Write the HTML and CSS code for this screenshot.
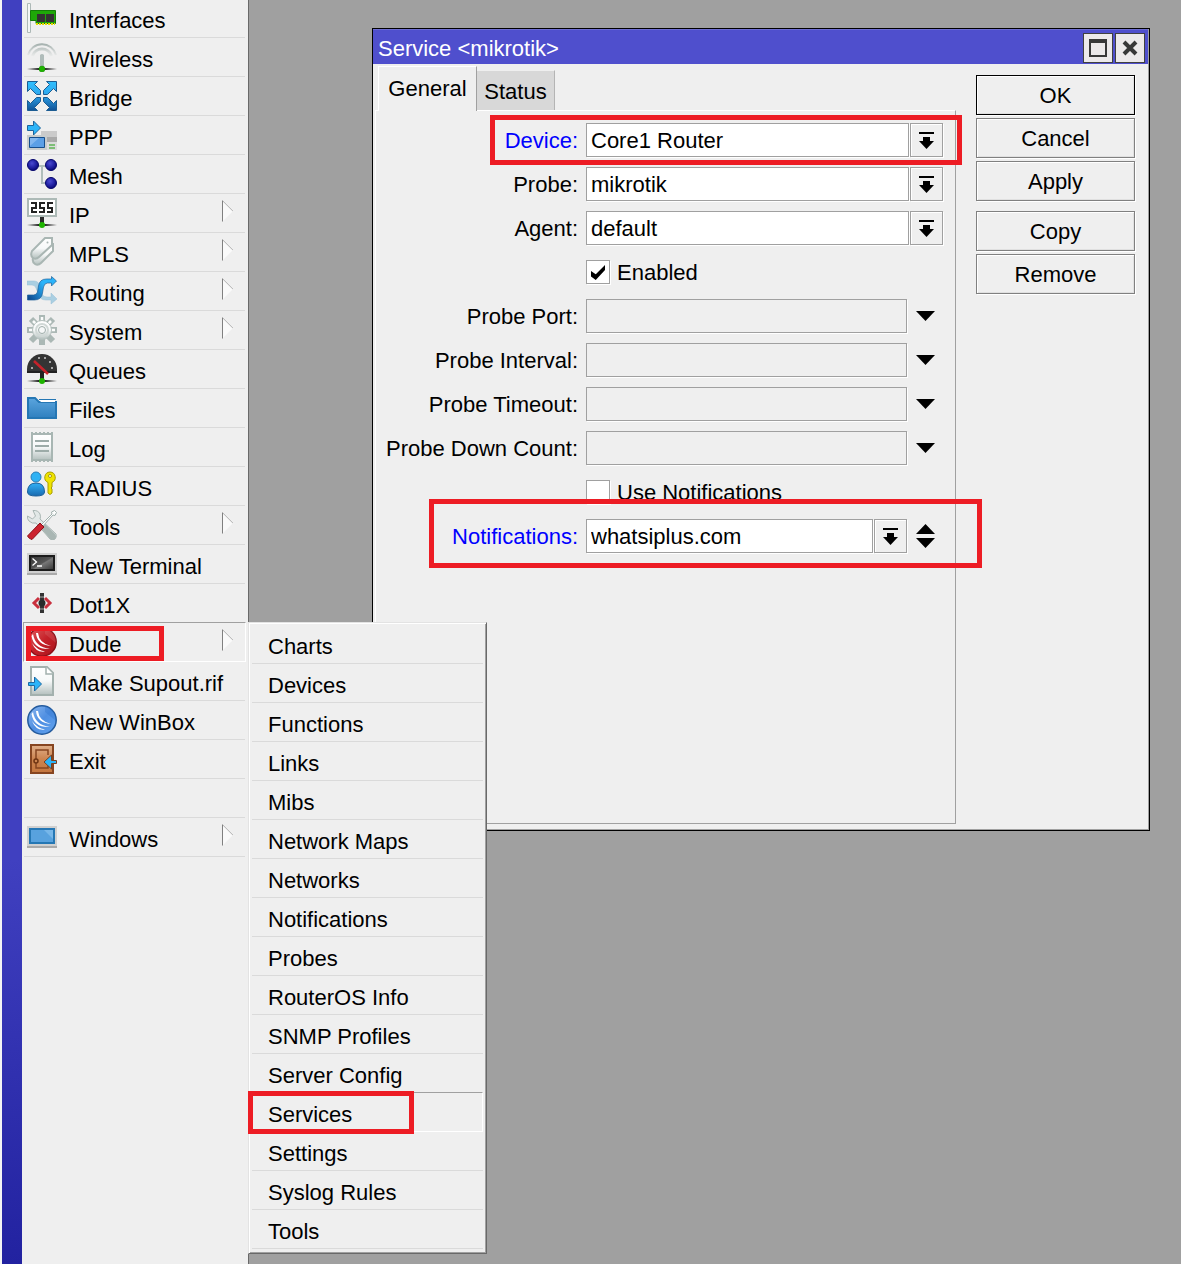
FILE: index.html
```html
<!DOCTYPE html>
<html lang="en">
<head>
<meta charset="utf-8">
<title>WinBox</title>
<link rel="stylesheet" href="styles.css">
</head>
<body>
<svg class="defs" width="0" height="0" aria-hidden="true">
  <defs>
    <linearGradient id="sky" x1="0" y1="0" x2="0" y2="30" gradientUnits="userSpaceOnUse"><stop offset="0" stop-color="#2fc0ff"/><stop offset=".45" stop-color="#2fa8ee"/><stop offset="1" stop-color="#0f4f94"/></linearGradient>
    <linearGradient id="silver" x1="0" y1="0" x2="0" y2="1"><stop offset="0" stop-color="#fff"/><stop offset=".5" stop-color="#f6f8f8"/><stop offset="1" stop-color="#b4c0be"/></linearGradient>
    <linearGradient id="fade" x1="0" y1="0" x2="30" y2="0" gradientUnits="userSpaceOnUse"><stop offset="0" stop-color="#222" stop-opacity="0"/><stop offset=".4" stop-color="#222"/><stop offset=".6" stop-color="#222"/><stop offset="1" stop-color="#222" stop-opacity="0"/></linearGradient>
    <linearGradient id="wave" x1="0" y1="0" x2="0" y2="15" gradientUnits="userSpaceOnUse"><stop offset="0" stop-color="#98a6a3"/><stop offset="1" stop-color="#a3b0ad" stop-opacity="0"/></linearGradient>
    <linearGradient id="flow" x1="0" y1="24" x2="26" y2="4" gradientUnits="userSpaceOnUse"><stop offset="0" stop-color="#0b3f86"/><stop offset=".7" stop-color="#2bb4fa"/></linearGradient>
    <radialGradient id="ball" cx=".4" cy=".35" r=".65"><stop offset="0" stop-color="#4a4ad0"/><stop offset=".55" stop-color="#2525a8"/><stop offset="1" stop-color="#0a0a78"/></radialGradient>
    <linearGradient id="red" x1="0" y1="0" x2="1" y2="1"><stop offset="0" stop-color="#e06060"/><stop offset=".5" stop-color="#c6222a"/><stop offset="1" stop-color="#a8141c"/></linearGradient>
    <linearGradient id="blue" x1="0" y1="0" x2="1" y2="1"><stop offset="0" stop-color="#8cb8f0"/><stop offset=".5" stop-color="#4f8fe2"/><stop offset="1" stop-color="#62a4f0"/></linearGradient>
    <linearGradient id="screen" x1="0" y1="0" x2="1" y2="1"><stop offset="0" stop-color="#333"/><stop offset=".5" stop-color="#555"/><stop offset=".55" stop-color="#777"/><stop offset="1" stop-color="#333"/></linearGradient>
    <linearGradient id="folder" x1="0" y1="0" x2="0" y2="1"><stop offset="0" stop-color="#5ba5de"/><stop offset="1" stop-color="#2f80bf"/></linearGradient>
    <linearGradient id="wood" x1="0" y1="0" x2="0" y2="1"><stop offset="0" stop-color="#e0b08a"/><stop offset=".5" stop-color="#cc8450"/><stop offset="1" stop-color="#c4763e"/></linearGradient>
  </defs>
</svg>

<div class="app">
  <div class="brand-strip"></div>
  <nav class="menu" aria-label="Main menu">
    <ul class="menu-list">
      <li class="row"><a href="#"><svg class="icon" viewBox="0 0 30 30"><path d="M.5.5h3v29h-3z" fill="#f4f6f6" stroke="#adb9b7"/><path d="M3.500 7.500h25v13H9v-3H3.500z" fill="#1ea808" stroke="#147d08"/><path d="M10 11h8v8h-8zM19 11h8v8h-8z" fill="#333"/><path d="M9 21h19" stroke="#e4dc00" stroke-width="2" stroke-dasharray="2 1"/></svg>Interfaces</a></li>
      <li class="row"><a href="#"><svg class="icon" viewBox="0 0 30 30"><g fill="none" stroke="url(#wave)"><path d="M1 13a14.500 14.500 0 0 1 28 0" stroke-width="2"/><path d="M5.500 14a10 10 0 0 1 19 0" stroke-width="3"/></g><path d="M13 13q2-2 4 0v12h-4z" fill="#b0bcba"/><path d="M0 27h30" stroke="url(#fade)" stroke-width="2"/><circle cx="15" cy="27" r="3" fill="#1eb400" stroke="#158a00" stroke-width=".5"/></svg>Wireless</a></li>
      <li class="row"><a href="#"><svg class="icon" viewBox="0 0 30 30"><g fill="url(#sky)" stroke="#1c5c92" stroke-width="1"><path d="M.5.500h10l-3 3 6 6v4h-4l-6-6-3 3z"/><path d="M29.500.500h-10l3 3-6 6v4h4l6-6 3 3z"/><path d="M.5 29.500h10l-3-3 6-6v-4h-4l-6 6-3-3z"/><path d="M29.500 29.500h-10l3-3-6-6v-4h4l6 6 3-3z"/></g></svg>Bridge</a></li>
      <li class="row"><a href="#"><svg class="icon" viewBox="0 0 30 30"><path d="M14 11h16v6H14z" fill="#cbcbcb"/><path d="M20 17h10v5H20z" fill="#aaa"/><path d="M0 15h20v15H0z" fill="#c9cccc"/><path d="M20 22h10v8H20z" fill="#dcdcdc"/><path d="M22 25h6M22 28h6" stroke="#1ea010"/><path d="M2.500 17.500h15v10h-15z" fill="#5b9fe6" stroke="#164e8c"/><path d="M3 18h9l-9 8z" fill="#9cc6f4" opacity=".6"/><path d="M.5 5.500h6V1l7 7-7 7v-4.500h-6z" fill="#2cb4f8" stroke="#1c649c"/></svg>PPP</a></li>
      <li class="row"><a href="#"><svg class="icon" viewBox="0 0 30 30"><path d="M6 7h18M15 7v17h9" fill="none" stroke="#b0bebb" stroke-width="2"/><circle cx="6" cy="6" r="5.500" fill="url(#ball)" stroke="#06066c"/><circle cx="24" cy="6" r="5.500" fill="url(#ball)" stroke="#06066c"/><circle cx="24" cy="24" r="5.500" fill="url(#ball)" stroke="#06066c"/></svg>Mesh</a></li>
      <li class="row"><a href="#"><svg class="icon" viewBox="0 0 30 30"><path d="M1 1h28v17H1z" fill="#fff" stroke="#adbab7" stroke-width="2"/><g fill="none" stroke="#222" stroke-width="2"><path d="M4 5h5v5H5v4h5"/><path d="M18 5h-5v5h4v4h-5"/><path d="M26 5h-5v5h4v4h-5"/></g><path d="M13 19h4v6h-4z" fill="#2b2b2b"/><path d="M0 27h30" stroke="url(#fade)" stroke-width="2"/><circle cx="15" cy="27" r="3" fill="#1eb400"/></svg>IP<i class="more"></i></a></li>
      <li class="row"><a href="#"><svg class="icon" viewBox="0 0 30 30"><g stroke="#a9b6b3" stroke-width="2" fill="url(#silver)"><path d="M20 7h6v7L14 26q-3 3-6 1t-2-6z"/><path d="M18 1h7v7L12 20q-3 3-6 1t-1-7z"/></g><circle cx="20.500" cy="5.500" r="1" fill="#a9b6b3"/></svg>MPLS<i class="more"></i></a></li>
      <li class="row"><a href="#"><svg class="icon" viewBox="0 0 30 30"><path d="M0 5h7q5 0 6 6l2 7q1 3 5 3h4v-4l6 6-6 5v-4h-5q-7 0-8-7l-2-5q-1-3-4-3H0z" fill="#aacfe2" stroke="#95bfd6" stroke-width=".5"/><path d="M.5 19h6q3 0 4-3l1-6q1-7 8-7h5V.500l5 4.500-5 5V7h-4q-3 0-4 4l-1 6q-1 7-8 7h-7z" fill="url(#flow)" stroke="#1c5e98" stroke-width=".7"/></svg>Routing<i class="more"></i></a></li>
      <li class="row"><a href="#"><svg class="icon" viewBox="0 0 30 30"><g stroke="#abb8b5" stroke-width="6"><path d="M15 0v30M0 15h30M4 4l22 22M26 4L4 26"/></g><path d="M15 2v8M2 15h8M28 15h-8M6 6l5 5M24 6l-5 5" stroke="#fbfcfc" stroke-width="2.500"/><circle cx="15" cy="15" r="9.500" fill="url(#silver)" stroke="#b4c0bd"/><circle cx="15" cy="15" r="6" fill="none" stroke="#d0d8d6" stroke-width="2"/><circle cx="15" cy="15" r="3.500" fill="#f6f8f8" stroke="#9fadaa"/></svg>System<i class="more"></i></a></li>
      <li class="row"><a href="#"><svg class="icon" viewBox="0 0 30 30"><path d="M0 19v-4a15 15 0 0 1 30 0v4z" fill="#343434"/><path d="M0 17h30v2H0zM13 19h4v6h-4z" fill="#222"/><g fill="#ccc"><circle cx="5" cy="14" r="1"/><circle cx="12" cy="4" r="1"/><circle cx="18" cy="4" r="1"/><circle cx="23" cy="8" r="1"/><circle cx="25" cy="14" r="1"/></g><path d="M7 7l14 13" stroke="#c6222a" stroke-width="2.500"/><path d="M0 27h30" stroke="url(#fade)" stroke-width="2"/><circle cx="15" cy="27" r="3" fill="#1eb400"/></svg>Queues</a></li>
      <li class="row"><a href="#"><svg class="icon" viewBox="0 0 30 30"><path d="M1 5h7l4 4h17v16H1z" fill="url(#folder)" stroke="#2577b4" stroke-width="2"/><path d="M12 7h16v2H14z" fill="#fff"/><path d="M12 6.500h17" stroke="#2577b4"/></svg>Files</a></li>
      <li class="row"><a href="#"><svg class="icon" viewBox="0 0 30 30"><path d="M5 2h20v26H5z" fill="url(#silver)" stroke="#a8b6b3" stroke-width="2"/><path d="M4 1h22M4 29h22" stroke="#a8b6b3" stroke-width="2" stroke-dasharray="2 2"/><path d="M8 9h14M8 14h14M8 19h14" stroke="#9caba8" stroke-width="2"/></svg>Log</a></li>
      <li class="row"><a href="#"><svg class="icon" viewBox="0 0 30 30"><path d="M.5 21q0-9 8.500-9t8.500 9q0 4-8.500 4T.500 21z" fill="url(#sky)" stroke="#1b5f9a"/><circle cx="9" cy="6" r="5" fill="#2fb2f4" stroke="#2a7fb8"/><path d="M23 1a5.500 5.500 0 0 1 2 10.500V16l-1 1 1 1v4l-2 1.500-2-1.500V11.500A5.500 5.500 0 0 1 23 1z" fill="#f0e400" stroke="#a89c00"/><circle cx="23" cy="5" r="1.500" fill="#fff" stroke="#a89c00"/></svg>RADIUS</a></li>
      <li class="row"><a href="#"><svg class="icon" viewBox="0 0 30 30"><path d="M6 .5Q11 0 13 4q1 3 0 5l16 15q1 3-1 5t-5 0L9 13q-4 1-7-2Q0 9 .5 6l5 3 3-3z" fill="#e2e8e7" stroke="#a9b6b3"/><path d="M18 14l10 10q2 3 0 5t-5 0L14 18z" fill="#a9b6b3"/><path d="M14 15L25 4l-.5-2 3-1.500 2 2-1.500 3-2-.5L15 17z" fill="#fff" stroke="#a0afac"/><path d="M13 13l4 4L5 29.500Q2 29 .5 26z" fill="#cc2430" stroke="#8c1018"/></svg>Tools<i class="more"></i></a></li>
      <li class="row"><a href="#"><svg class="icon" viewBox="0 0 30 30"><path d="M0 4h30v20H0z" fill="#d0d0d0"/><path d="M0 24h30v2H0z" fill="#aaa"/><path d="M3 7h24v14H3z" fill="url(#screen)" stroke="#1c1c1c" stroke-width="2"/><path d="M5.500 9.500l4 3.500-4 3.500M10 17h5" fill="none" stroke="#fff" stroke-width="1.300"/></svg>New Terminal</a></li>
      <li class="row"><a href="#"><svg class="icon" viewBox="0 0 30 30"><path d="M13 5h4v20h-4z" fill="#333"/><path d="M12 10L7 15l5 5M18 10l5 5-5 5" fill="none" stroke="#c8303e" stroke-width="3"/><path d="M13 9h4M13 21h4" stroke="#aaa"/><circle cx="15" cy="15" r="3.500" fill="#2a2a2a"/></svg>Dot1X</a></li>
      <li class="row row-open"><a href="#" aria-expanded="true"><svg class="icon" viewBox="0 0 30 30"><circle cx="15" cy="15" r="14.200" fill="url(#red)" stroke="#8e1018" stroke-width="1.500"/><path d="M18 1a14 14 0 0 1 11 15L18 7z" fill="#fff" opacity=".1"/><path d="M11 6Q12 16 24 19Q10 18 9 6zM6 7Q8 20 23 22Q7 23 4.500 9zM5 16Q10 23 18 24.500Q9 26 5 16z" fill="#fff"/></svg>Dude<i class="more"></i></a>
        <span class="mark mark-dude"></span>
        <ul class="submenu">
          <li class="row"><a href="#">Charts</a></li>
          <li class="row"><a href="#">Devices</a></li>
          <li class="row"><a href="#">Functions</a></li>
          <li class="row"><a href="#">Links</a></li>
          <li class="row"><a href="#">Mibs</a></li>
          <li class="row"><a href="#">Network Maps</a></li>
          <li class="row"><a href="#">Networks</a></li>
          <li class="row"><a href="#">Notifications</a></li>
          <li class="row"><a href="#">Probes</a></li>
          <li class="row"><a href="#">RouterOS Info</a></li>
          <li class="row"><a href="#">SNMP Profiles</a></li>
          <li class="row"><a href="#">Server Config</a></li>
          <li class="row row-open"><a href="#">Services</a><span class="mark mark-services"></span></li>
          <li class="row"><a href="#">Settings</a></li>
          <li class="row"><a href="#">Syslog Rules</a></li>
          <li class="row"><a href="#">Tools</a></li>
        </ul>
      </li>
      <li class="row"><a href="#"><svg class="icon" viewBox="0 0 30 30"><path d="M4 1h16l6 6v22H4z" fill="url(#silver)" stroke="#a3b1ae" stroke-width="2"/><path d="M19 1v7h7" fill="#fff" stroke="#a3b1ae" stroke-width="1.500"/><path d="M1.500 16.500h6V11l7 7-7 7v-5.500h-6z" fill="#2cb4f8" stroke="#1c6aa4"/></svg>Make Supout.rif</a></li>
      <li class="row"><a href="#"><svg class="icon" viewBox="0 0 30 30"><circle cx="15" cy="15" r="14.200" fill="url(#blue)" stroke="#235a9c" stroke-width="1.500"/><path d="M18 1a14 14 0 0 1 11 15L18 7z" fill="#2f74cc" opacity=".35"/><path d="M11 6Q12 16 24 19Q10 18 9 6zM6 7Q8 20 23 22Q7 23 4.500 9zM5 16Q10 23 18 24.500Q9 26 5 16z" fill="#fff"/></svg>New WinBox</a></li>
      <li class="row"><a href="#"><svg class="icon" viewBox="0 0 30 30"><path d="M4 1h22v28H4z" fill="url(#wood)" stroke="#864520" stroke-width="2"/><path d="M9 15V6h12v5M9 19v5h12v-3" fill="none" stroke="#864520" stroke-width="1.500"/><circle cx="9" cy="17" r="2" fill="#cc8450" stroke="#6e3412" stroke-width="1.500"/><path d="M29.500 16.500h-5V11l-7.500 7 7.500 7v-5.500h5z" fill="#2cb4f8" stroke="#7a4020"/></svg>Exit</a></li>
      <li class="row"></li>
      <li class="row"><a href="#"><svg class="icon" viewBox="0 0 30 30"><path d="M0 4h30v20H0z" fill="#d0d0d0"/><path d="M0 24h30v2H0z" fill="#aaa"/><path d="M3 7h24v14H3z" fill="#58a2de" stroke="#2577b4" stroke-width="2"/><path d="M17 8h9v9z" fill="#8cc4f0" opacity=".6"/></svg>Windows<i class="more"></i></a></li>
    </ul>
  </nav>

  <main class="desktop">
    <section class="window" aria-label="Service">
      <header class="titlebar">
        <h1>Service &lt;mikrotik&gt;</h1>
        <button class="tool" type="button" aria-label="Maximize"><svg width="18" height="18" viewBox="0 0 18 18"><path d="M1 1h16v16H1z" fill="none" stroke="#383838" stroke-width="2"/><path d="M0 0h18v4H0z" fill="#383838"/></svg></button>
        <button class="tool" type="button" aria-label="Close"><svg width="18" height="18" viewBox="0 0 18 18"><path d="M3 3l12 12M15 3L3 15" stroke="#383838" stroke-width="4"/></svg></button>
      </header>
      <div class="content">
        <div class="tabbed">
          <div class="tabs" role="tablist">
            <button class="tab tab-active" type="button" role="tab" aria-selected="true">General</button>
            <button class="tab" type="button" role="tab" aria-selected="false">Status</button>
          </div>
          <form class="panel">
            <div class="field">
              <label class="changed" for="device">Device:</label>
              <input id="device" type="text" value="Core1 Router">
              <button class="drop" type="button" aria-label="Choose device"><svg width="15" height="17" viewBox="0 0 15 17"><path d="M0 0h15v2H0zM4 5h7v4h4l-7.500 8L0 9h4z"/></svg></button>
              <span class="mark mark-device"></span>
            </div>
            <div class="field">
              <label for="probe">Probe:</label>
              <input id="probe" type="text" value="mikrotik">
              <button class="drop" type="button" aria-label="Choose probe"><svg width="15" height="17" viewBox="0 0 15 17"><path d="M0 0h15v2H0zM4 5h7v4h4l-7.500 8L0 9h4z"/></svg></button>
            </div>
            <div class="field">
              <label for="agent">Agent:</label>
              <input id="agent" type="text" value="default">
              <button class="drop" type="button" aria-label="Choose agent"><svg width="15" height="17" viewBox="0 0 15 17"><path d="M0 0h15v2H0zM4 5h7v4h4l-7.500 8L0 9h4z"/></svg></button>
            </div>
            <div class="field check">
              <input id="enabled" type="checkbox" checked>
              <label for="enabled">Enabled</label>
            </div>
            <div class="field">
              <label for="port">Probe Port:</label>
              <input id="port" class="unset" type="text">
              <button class="toggle" type="button" aria-label="Set probe port"><svg width="19" height="10" viewBox="0 0 19 10"><path d="M0 0h19L9.500 10z"/></svg></button>
            </div>
            <div class="field">
              <label for="interval">Probe Interval:</label>
              <input id="interval" class="unset" type="text">
              <button class="toggle" type="button" aria-label="Set probe interval"><svg width="19" height="10" viewBox="0 0 19 10"><path d="M0 0h19L9.500 10z"/></svg></button>
            </div>
            <div class="field">
              <label for="timeout">Probe Timeout:</label>
              <input id="timeout" class="unset" type="text">
              <button class="toggle" type="button" aria-label="Set probe timeout"><svg width="19" height="10" viewBox="0 0 19 10"><path d="M0 0h19L9.500 10z"/></svg></button>
            </div>
            <div class="field">
              <label for="down">Probe Down Count:</label>
              <input id="down" class="unset" type="text">
              <button class="toggle" type="button" aria-label="Set probe down count"><svg width="19" height="10" viewBox="0 0 19 10"><path d="M0 0h19L9.500 10z"/></svg></button>
            </div>
            <div class="field check">
              <input id="use" type="checkbox">
              <label for="use">Use Notifications</label>
            </div>
            <div class="field">
              <label class="changed" for="notify">Notifications:</label>
              <input id="notify" type="text" value="whatsiplus.com">
              <button class="drop" type="button" aria-label="Choose notification"><svg width="15" height="17" viewBox="0 0 15 17"><path d="M0 0h15v2H0zM4 5h7v4h4l-7.500 8L0 9h4z"/></svg></button>
              <button class="toggle" type="button" aria-label="Add or remove notification"><svg width="19" height="24" viewBox="0 0 19 24"><path d="M0 10h19L9.500 0zM0 14h19L9.500 24z"/></svg></button>
              <span class="mark mark-notify"></span>
            </div>
          </form>
        </div>
        <div class="actions">
          <button class="action action-default" type="button">OK</button>
          <button class="action" type="button">Cancel</button>
          <button class="action" type="button">Apply</button>
          <button class="action action-group" type="button">Copy</button>
          <button class="action" type="button">Remove</button>
        </div>
      </div>
    </section>
  </main>
</div>
</body>
</html>
```

FILE: styles.css
```css
* {
  box-sizing: border-box;
}

body {
  margin: 0;
  background: #a0a0a0;
  color: #000;
  font: 22px/26px "Liberation Sans", Arial, sans-serif;
}

button,
input {
  margin: 0;
  color: inherit;
  font: inherit;
}

button {
  display: flex;
  align-items: center;
  justify-content: center;
  padding: 0;
  background: #efefef;
}

ul {
  margin: 0;
  padding: 0;
  list-style: none;
}

.defs {
  position: absolute;
}

.app {
  display: flex;
  height: 100vh;
  overflow: hidden;
}

.brand-strip {
  flex: none;
  width: 22px;
  border-left: 2px solid #f4f4f4;
  background: linear-gradient(#4040c0 68%, #2222a0);
}

/* Main menu */

.menu {
  flex: none;
  width: 227px;
  border-right: 1px solid #696969;
  background: #efefef;
}

.menu-list {
  margin: -1px 2px 0 1px;
}

.row {
  position: relative;
  height: 39px;
  padding: 0 1px;
}

.row::after {
  content: "";
  display: block;
  height: 1px;
  background: #dadada;
}

.row > a {
  display: flex;
  align-items: center;
  gap: 12px;
  height: 38px;
  padding: 6px 12px 0 3px;
  color: inherit;
  text-decoration: none;
}

.row:empty {
  padding-top: 38px;
}

.icon {
  flex: none;
  width: 30px;
  height: 30px;
  margin-top: -6px;
}

.more {
  width: 11px;
  height: 22px;
  margin: -10px 0 0 auto;
  border-left: 1px solid #808080;
  background: linear-gradient(45deg, #fafafa 62%, #808080 66%);
  clip-path: polygon(0 0, 100% 50%, 0 100%);
}

.row-open {
  height: 40px;
  margin-top: -1px;
  padding: 0;
  border: 1px solid;
  border-color: #a0a0a0 #fff #fff #a0a0a0;
}

.row-open::after {
  display: none;
}

.submenu {
  position: absolute;
  top: -1px;
  left: 224px;
  z-index: 2;
  width: 239px;
  padding: 2px 3px 4px;
  border: 1px solid;
  border-color: #e3e3e3 #696969 #696969 #e3e3e3;
  background: #efefef;
  box-shadow: inset 1px 1px #fff, inset -1px -1px #a0a0a0;
}

.submenu .row {
  padding: 0;
}

.submenu .row > a {
  padding-left: 16px;
}

.submenu .row-open > a {
  padding-left: 15px;
}

/* Red call-out frames */

.mark {
  position: absolute;
  z-index: 3;
  border: 5px solid #ed1c24;
  pointer-events: none;
}

.mark-dude {
  inset: 3px 81px 0 2px;
}

.mark-services {
  inset: -2px 68px -3px -5px;
}

.mark-device {
  inset: -8px -19px -8px 114px;
}

.mark-notify {
  inset: -20px -39px -15px 53px;
}

/* Service window */

.desktop {
  position: relative;
  flex: 1;
}

.window {
  position: absolute;
  top: 28px;
  right: 31px;
  left: 123px;
  border: 1px solid #000;
  background: #efefef;
  box-shadow: inset -1px -1px #a0a0a0;
}

.titlebar {
  display: flex;
  align-items: center;
  gap: 2px;
  height: 35px;
  margin-right: 1px;
  padding: 1px 3px 0 5px;
  border-top: 1px solid #6c6cd2;
  background: #4f4fcd;
}

.titlebar h1 {
  flex: 1;
  margin: 0;
  padding-top: 2px;
  color: #fff;
  font: inherit;
}

.tool {
  width: 30px;
  height: 30px;
  border: 1px solid #404040;
  background: #ece9ea;
}

.content {
  display: flex;
  gap: 20px;
  padding: 2px 14px 6px 2px;
}

.tabbed {
  flex: 1;
  min-width: 0;
}

.tabs {
  display: flex;
  align-items: flex-end;
  padding-left: 3px;
}

.tab {
  width: 78px;
  height: 40px;
  padding-top: 2px;
  border: 0;
  border-top: 1px solid #efefef;
  border-right: 1px solid #b4b4b4;
  background: #d8d8d8;
}

.tab-active {
  width: 99px;
  height: 45px;
  margin-bottom: -1px;
  padding-top: 0;
  border-top: 1px solid #fff;
  border-right: 1px solid #a0a0a0;
  border-left: 1px solid #fff;
  background: #efefef;
}

.panel {
  display: flex;
  flex-direction: column;
  gap: 10px;
  min-height: 714px;
  padding: 12px 12px 12px 0;
  border: 1px solid;
  border-color: #fff #a0a0a0 #a0a0a0 #fff;
}

.field {
  position: relative;
  display: flex;
  align-items: center;
  height: 34px;
}

.field > label {
  flex: none;
  width: 210px;
  padding: 2px 8px 0 0;
  text-align: right;
}

.field .changed {
  color: #0000ff;
}

.field > input[type="text"] {
  flex: 1;
  min-width: 0;
  height: 34px;
  padding: 2px 4px 0;
  border: 1px solid #a0a0a0;
  border-radius: 0;
  background: #fff;
  box-shadow: 1px 1px #fff;
}

.field > input.unset[type="text"] {
  background: #efefef;
}

.drop {
  flex: none;
  width: 33px;
  height: 34px;
  margin-left: 1px;
  border: 1px solid #a0a0a0;
  box-shadow: 1px 1px #fff, inset 1px 1px #fff;
}

.toggle {
  flex: none;
  width: 36px;
  height: 34px;
  border: 0;
  background: none;
}

.check {
  padding-left: 210px;
}

.check > label {
  width: auto;
  padding: 2px 0 0 7px;
}

.check > input {
  width: 24px;
  height: 24px;
  border: 1px solid #a0a0a0;
  background: #fff;
  box-shadow: 1px 1px #fff;
  appearance: none;
}

.check > input:checked::before {
  content: "";
  display: block;
  width: 14px;
  height: 15px;
  margin: 4px;
  background: #000;
  clip-path: polygon(0 40%, 34% 62%, 100% 0, 100% 34%, 34% 100%, 0 76%);
}

.actions {
  display: flex;
  flex: none;
  flex-direction: column;
  gap: 3px;
  width: 159px;
  padding-top: 9px;
}

.action {
  height: 40px;
  padding-top: 2px;
  border: 1px solid #808080;
  box-shadow: 1px 1px #fff, inset 1px 1px #fff, inset -1px -1px #e0e0e0;
}

.action-default {
  border-color: #000;
}

.action-group {
  margin-top: 7px;
}
```
